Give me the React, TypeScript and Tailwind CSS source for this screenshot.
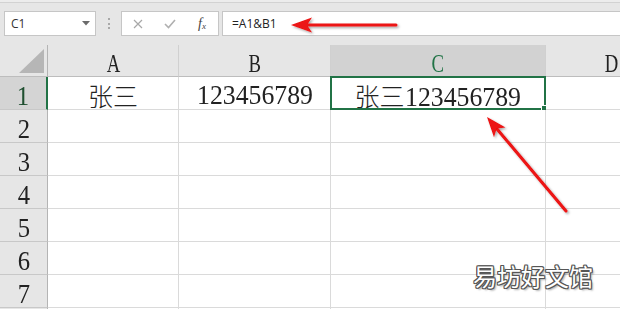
import React from "react";

const cols = [
  { key: "A", w: "w-[131px]" },
  { key: "B", w: "w-[152px]" },
  { key: "C", w: "w-[215px]" },
  { key: "D", w: "w-[131px]" },
];

function Digits({ text }: { text: string }) {
  return (
    <span className="inline-block origin-center scale-x-[0.92] text-[28px] font-['Liberation_Serif',serif]">
      {text}
    </span>
  );
}

function Cjk({ text }: { text: string }) {
  return (
    <span className="inline-block text-[25px] font-['Noto_Sans_CJK_SC',sans-serif] font-light">
      {text}
    </span>
  );
}

function CellContent({ r, c }: { r: number; c: string }) {
  if (r !== 1) return null;
  if (c === "A") return <Cjk text="张三" />;
  if (c === "B") return <Digits text="123456789" />;
  if (c === "C")
    return (
      <span className="whitespace-nowrap">
        <Cjk text="张三" />
        <span className="inline-block origin-left scale-x-[0.92] -mr-[9px] text-[28px] font-['Liberation_Serif',serif]">
          123456789
        </span>
      </span>
    );
  return null;
}

export default function App() {
  const rows = [1, 2, 3, 4, 5, 6, 7, 8];
  return (
    <div className="relative w-[620px] h-[309px] overflow-hidden bg-white text-[#222]">
      {/* Toolbar */}
      <div className="h-[45px] bg-[#e6e6e6] flex flex-col">
        <div className="h-[3px] border-b border-[#d2d2d2] bg-[#ececec]" />
        <div className="mt-[8px] flex items-center h-[25px]">
          <div className="ml-[4px] w-[92px] h-[25px] bg-white border border-[#c6c6c6] flex items-center justify-between pl-[6px] pr-[5px] font-['Open_Sans','Liberation_Sans',sans-serif] text-[12px] text-[#333]">
            <span>C1</span>
            <svg width="8" height="5" viewBox="0 0 8 5">
              <polygon points="0,0 8,0 4,4.5" fill="#6b6b6b" />
            </svg>
          </div>
          <div className="w-[25px] flex flex-col items-center gap-[2.5px]">
            <div className="w-[2px] h-[2px] bg-[#a8a8a8]" />
            <div className="w-[2px] h-[2px] bg-[#a8a8a8]" />
            <div className="w-[2px] h-[2px] bg-[#a8a8a8]" />
          </div>
          <div className="w-[98px] h-[25px] bg-white border border-[#c6c6c6] flex">
            <div className="w-[32px] flex items-center justify-center">
              <svg width="10" height="10" viewBox="0 0 10 10">
                <path d="M1 1 L9 9 M9 1 L1 9" stroke="#a8a8a8" strokeWidth="1.2" />
              </svg>
            </div>
            <div className="w-[32px] flex items-center justify-center">
              <svg width="12" height="10" viewBox="0 0 12 10">
                <path d="M1 5 L4.5 8.5 L11 1" stroke="#b0b0b0" strokeWidth="1.6" fill="none" />
              </svg>
            </div>
            <div className="w-[32px] flex items-center justify-center font-['Liberation_Serif',serif] italic text-[14px] text-[#444] leading-none">
              <span>f</span>
              <span className="text-[9px] mt-[5px]">x</span>
            </div>
          </div>
          <div className="ml-[3px] flex-1 h-[25px] bg-white border border-[#c6c6c6] border-r-0 flex items-center pl-[9px] font-['Open_Sans','Liberation_Sans',sans-serif] text-[12px] text-[#222]">
            =A1&amp;B1
          </div>
        </div>
      </div>

      {/* Header row */}
      <div className="flex h-[32px]">
        <div className="w-[48px] shrink-0 bg-[#e6e6e6] border-r border-b border-r-[#b4b4b4] border-b-[#bdbdbd] relative">
          <svg className="absolute left-0 top-0" width="47" height="31" viewBox="0 0 47 31">
            <polygon points="44,4 44,28 19,28" fill="#b6b6b6" />
          </svg>
        </div>
        {cols.map((c) => (
          <div
            key={c.key}
            className={`${c.w} shrink-0 border-r border-b border-r-[#d0d0d0] border-b-[#bdbdbd] flex justify-center pt-[6px] ${
              c.key === "C" ? "bg-[#d2d2d2] text-[#217346]" : "bg-[#e6e6e6] text-[#222]"
            }`}
          >
            <span className="inline-block scale-x-[0.72] text-[26px] leading-[26px] font-['Liberation_Serif',serif]">
              {c.key}
            </span>
          </div>
        ))}
      </div>

      {/* Body rows */}
      {rows.map((r) => (
        <div key={r} className="flex h-[33px]">
          <div
            className={`w-[48px] shrink-0 border-b border-b-[#c8c8c8] flex justify-center pt-[5px] ${
              r === 1
                ? "bg-[#d4d4d4] border-r-2 border-r-[#217346] text-[#1f4f30]"
                : "bg-[#e6e6e6] border-r border-r-[#b4b4b4] text-[#222]"
            }`}
          >
            {r <= 7 && (
              <span className="inline-block scale-x-[0.88] text-[28px] leading-[28px] font-['Liberation_Serif',serif]">
                {r}
              </span>
            )}
          </div>
          {cols.map((c) => (
            <div
              key={c.key}
              className={`${c.w} shrink-0 border-r border-b border-[#dadada] bg-white flex justify-center items-start pt-[4px] leading-[28px] relative`}
            >
              <CellContent r={r} c={c.key} />
              {r === 1 && c.key === "C" && (
                <div className="absolute -inset-[1px] border-2 border-[#217346]">
                  <div className="absolute -right-[3px] -bottom-[3px] w-[6px] h-[6px] bg-[#217346] border border-white" />
                </div>
              )}
            </div>
          ))}
        </div>
      ))}

      {/* Annotations */}
      <svg className="absolute left-0 top-0 pointer-events-none" width="620" height="309" viewBox="0 0 620 309">
        <defs>
          <filter id="sh" x="-20%" y="-20%" width="140%" height="140%">
            <feDropShadow dx="1.5" dy="1.5" stdDeviation="1" floodColor="#000" floodOpacity="0.35" />
          </filter>
        </defs>
        <g filter="url(#sh)" fill="#ec1212" stroke="#ec1212">
          <line x1="396" y1="25" x2="305" y2="25" strokeWidth="3" strokeLinecap="round" />
          <polygon points="291,25 312,17.5 307,25 312,32.5" stroke="none" />
          <line x1="566" y1="211" x2="497" y2="129" strokeWidth="3" strokeLinecap="round" />
          <polygon points="487,117 505.5,127.6 496.6,128.5 494,137.2" stroke="none" />
        </g>
      </svg>

      <div className="absolute left-[473px] top-[262px] text-[24px] leading-[28px] font-['Noto_Sans_CJK_SC',sans-serif] text-white tracking-[0px] [text-shadow:-1px_-1px_0_#555,1px_-1px_0_#555,-1px_1px_0_#555,1px_1px_0_#555,0_-1px_0_#555,0_1px_0_#555,-1px_0_0_#555,1px_0_0_#555,2px_2px_2px_rgba(0,0,0,0.35)]">
        易坊好文馆
      </div>
    </div>
  );
}
